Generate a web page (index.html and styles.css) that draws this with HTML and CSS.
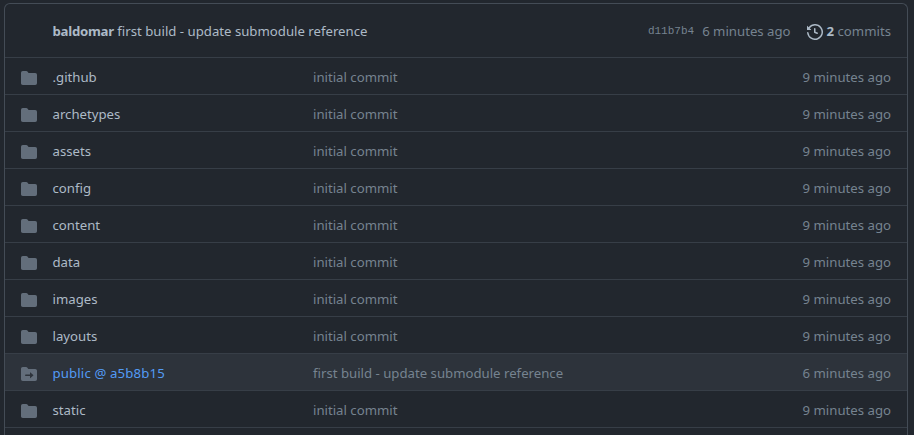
FILE: index.html
```html
<!DOCTYPE html>
<html lang="en">
<head>
<meta charset="utf-8">
<title>Files</title>
<link rel="stylesheet" href="styles.css">
</head>
<body>
<svg class="symbols" aria-hidden="true">
<symbol id="folder" viewBox="0 0 16 16"><path d="M1.75 1A1.75 1.75 0 000 2.75v10.5C0 14.216.784 15 1.75 15h12.5A1.75 1.75 0 0016 13.25v-8.5A1.75 1.75 0 0014.25 3h-6.5a.25.25 0 01-.2-.1l-.9-1.2c-.33-.44-.85-.7-1.4-.7h-3.5z"/></symbol>
<symbol id="submodule" viewBox="0 0 16 16"><path fill-rule="evenodd" d="M0 2.75C0 1.784.784 1 1.75 1H5c.55 0 1.07.26 1.4.7l.9 1.2a.25.25 0 00.2.1h6.75c.966 0 1.75.784 1.75 1.75v8.5A1.75 1.75 0 0114.25 15H1.75A1.75 1.75 0 010 13.25V2.75zm9.42 9.36l2.883-2.677a.25.25 0 000-.366L9.42 6.39a.25.25 0 00-.42.183V8.5H4.75a.75.75 0 100 1.5H9v1.927c0 .218.26.331.42.183z"/></symbol>
</svg>
<main class="box">
<header class="head">
<div class="commit"><b class="author">baldomar</b> first build - update submodule reference</div>
<code class="hash">d11b7b4</code><span class="ago">6 minutes ago</span>
<span class="history"><svg class="icon" viewBox="0 0 16 16"><path fill-rule="evenodd" d="M1.643 3.143L.427 1.927A.25.25 0 000 2.104V5.75c0 .138.112.25.25.25h3.646a.25.25 0 00.177-.427L2.715 4.215a6.5 6.5 0 11-1.18 4.458.75.75 0 10-1.493.154 8.001 8.001 0 101.6-5.684zM7.75 4a.75.75 0 01.75.75v2.992l2.028.812a.75.75 0 01-.557 1.392l-2.5-1A.75.75 0 017 8.25v-3.5A.75.75 0 017.75 4z"/></svg><span><b>2</b> commits</span></span>
</header>
<div class="row"><svg class="icon"><use href="#folder"/></svg><span class="name">.github</span><span class="message">initial commit</span><span class="age">9 minutes ago</span></div>
<div class="row"><svg class="icon"><use href="#folder"/></svg><span class="name">archetypes</span><span class="message">initial commit</span><span class="age">9 minutes ago</span></div>
<div class="row"><svg class="icon"><use href="#folder"/></svg><span class="name">assets</span><span class="message">initial commit</span><span class="age">9 minutes ago</span></div>
<div class="row"><svg class="icon"><use href="#folder"/></svg><span class="name">config</span><span class="message">initial commit</span><span class="age">9 minutes ago</span></div>
<div class="row"><svg class="icon"><use href="#folder"/></svg><span class="name">content</span><span class="message">initial commit</span><span class="age">9 minutes ago</span></div>
<div class="row"><svg class="icon"><use href="#folder"/></svg><span class="name">data</span><span class="message">initial commit</span><span class="age">9 minutes ago</span></div>
<div class="row"><svg class="icon"><use href="#folder"/></svg><span class="name">images</span><span class="message">initial commit</span><span class="age">9 minutes ago</span></div>
<div class="row"><svg class="icon"><use href="#folder"/></svg><span class="name">layouts</span><span class="message">initial commit</span><span class="age">9 minutes ago</span></div>
<div class="row active"><svg class="icon"><use href="#submodule"/></svg><span class="name">public @ a5b8b15</span><span class="message">first build - update submodule reference</span><span class="age">6 minutes ago</span></div>
<div class="row"><svg class="icon"><use href="#folder"/></svg><span class="name">static</span><span class="message">initial commit</span><span class="age">9 minutes ago</span></div>
<div class="row last"></div>
</main>
</body>
</html>
```
FILE: styles.css
```css
* { box-sizing: border-box; }
body { display: flow-root; margin: 0; background: #22272e; color: #adbac7; font: 13.2px/20px "Noto Sans", sans-serif; }
.symbols { display: none; }
.box { height: 432px; margin: 3px 6px 0 4px; border: 1px solid #444c56; border-bottom: 0; border-radius: 6px 6px 0 0; }
.head { display: flex; align-items: center; height: 53px; padding: 0 16px 0 47.5px; color: #768390; }
.commit { flex: 1; color: #adbac7; }
.author { letter-spacing: -0.25px; }
.hash { margin-right: 8px; padding-top: 1px; font: 11px/20px "Liberation Mono", monospace; }
.history { display: flex; align-items: center; gap: 4px; margin-left: 16px; }
.history b, .history .icon { color: #adbac7; fill: #adbac7; }
.history .icon { margin-top: 2px; }
.icon { width: 16px; height: 16px; fill: #636e7b; }
.row { display: grid; grid-template-columns: 31.5px 260.5px 1fr auto; align-items: center; height: 37px; padding: 2px 16px 0 16px; border-top: 1px solid #373e47; color: #768390; }
.row .icon { margin-top: 2px; }
.name { color: #adbac7; }
.active { background: #2d333b; }
.active .name { color: #539bf5; letter-spacing: 0.15px; }
.last { height: 7px; }
```
